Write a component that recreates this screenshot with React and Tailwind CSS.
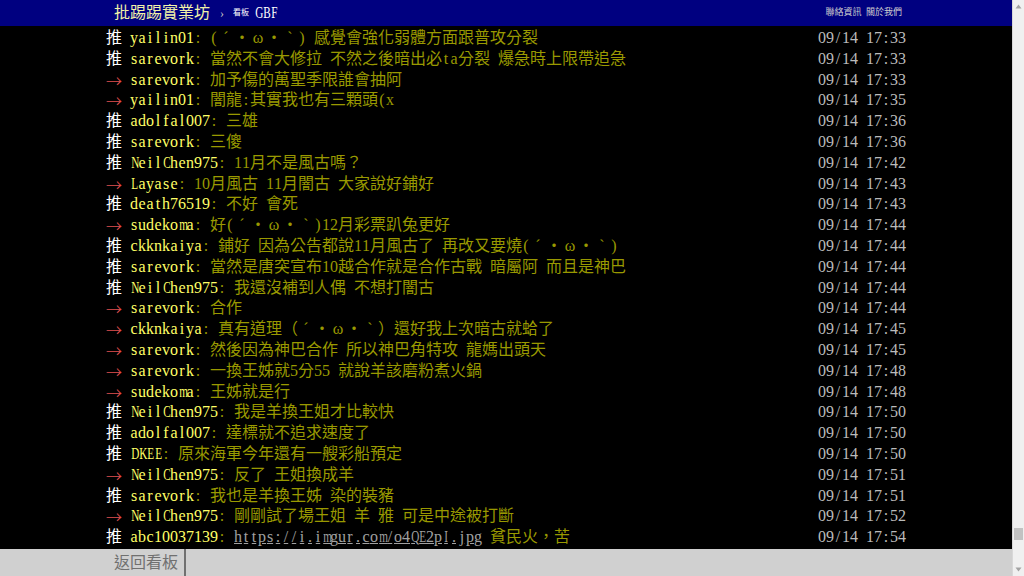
const rows = [
  ["推", "yailin01", ": (ˊ・ω・ˋ) 感覺會強化弱體方面跟普攻分裂", "09/14 17:33"],
  ["推", "sarevork", ": 當然不會大修拉 不然之後暗出必ta分裂 爆急時上限帶追急", "09/14 17:33"],
  ["→", "sarevork", ": 加予傷的萬聖季限誰會抽阿", "09/14 17:33"],
  ["→", "yailin01", ": 闇龍:其實我也有三顆頭(x", "09/14 17:35"],
  ["推", "adolfal007", ": 三雄", "09/14 17:36"],
  ["推", "sarevork", ": 三傻", "09/14 17:36"],
  ["推", "NeilChen975", ": 11月不是風古嗎？", "09/14 17:42"],
  ["→", "Layase", ": 10月風古 11月闇古 大家說好鋪好", "09/14 17:43"],
  ["推", "death76519", ": 不好 會死", "09/14 17:43"],
  ["→", "sudekoma", ": 好(ˊ・ω・ˋ)12月彩票趴兔更好", "09/14 17:44"],
  ["推", "ckknkaiya", ": 鋪好 因為公告都說11月風古了 再改又要燒(ˊ・ω・ˋ)", "09/14 17:44"],
  ["推", "sarevork", ": 當然是唐突宣布10越合作就是合作古戰 暗屬阿 而且是神巴", "09/14 17:44"],
  ["推", "NeilChen975", ": 我還沒補到人偶 不想打闇古", "09/14 17:44"],
  ["→", "sarevork", ": 合作", "09/14 17:44"],
  ["→", "ckknkaiya", ": 真有道理（ˊ・ω・ˋ）還好我上次暗古就蛤了", "09/14 17:45"],
  ["→", "sarevork", ": 然後因為神巴合作 所以神巴角特攻 龍媽出頭天", "09/14 17:45"],
  ["→", "sarevork", ": 一換王姊就5分55 就說羊該磨粉煮火鍋", "09/14 17:48"],
  ["→", "sudekoma", ": 王姊就是行", "09/14 17:48"],
  ["推", "NeilChen975", ": 我是羊換王姐才比較快", "09/14 17:50"],
  ["推", "adolfal007", ": 達標就不追求速度了", "09/14 17:50"],
  ["推", "DKEE", ": 原來海軍今年還有一艘彩船預定", "09/14 17:50"],
  ["→", "NeilChen975", ": 反了 王姐換成羊", "09/14 17:51"],
  ["推", "sarevork", ": 我也是羊換王姊 染的裝豬", "09/14 17:51"],
  ["→", "NeilChen975", ": 剛剛試了場王姐 羊 雅 可是中途被打斷", "09/14 17:52"],
  ["推", "abc10037139", null, "09/14 17:54"],
];

// terminal-style cells: half width for ascii, full width otherwise.
// wide latin glyphs get squeezed so they fit the 8px cell like MingLiU does
function cellClass(ch) {
  if (ch.charCodeAt(0) >= 128) return "inline-block w-4 text-center";
  if (/[A-Zmw@%]/.test(ch)) return "inline-block w-2 text-center scale-x-[0.7]";
  return "inline-block w-2 text-center";
}

function Cells({ text, className = "" }) {
  return [...text].map((ch, i) => (
    <span key={i} className={cellClass(ch) + " " + className}>
      {ch}
    </span>
  ));
}

function PushRow({ tag, user, content, time }) {
  return (
    <div className="flex whitespace-nowrap">
      {tag === "推" ? (
        <span className="inline-block w-4 text-center text-white">推</span>
      ) : (
        <span className="inline-block w-4 text-center text-[#e05050] font-['Noto_Sans_CJK_TC',sans-serif] font-light">→</span>
      )}
      <span className="inline-block w-2" />
      <span className="text-[#ffff66]">
        <Cells text={user} />
      </span>
      <span className="text-[#999900]">
        {content ? (
          <Cells text={content} />
        ) : (
          <>
            <Cells text=": " />
            <Cells text="https://i.imgur.com/o4QE2pI.jpg" className="underline text-[#a0a0a0]" />
            <Cells text=" 貧民火，苦" />
          </>
        )}
      </span>
      <span className="ml-auto text-[#bbbbbb]">
        <Cells text={time} />
      </span>
    </div>
  );
}

export default function App() {
  return (
    <div className="flex h-screen bg-black font-['Liberation_Serif','Noto_Sans_CJK_TC',serif]">
      <div className="flex flex-1 flex-col">
        <div className="h-[26px] bg-[#000080]">
          <div className="mx-auto flex h-full w-[800px] items-center pl-2 pr-1">
            <span className="text-base text-[#f2f2a8]">批踢踢實業坊</span>
            <span className="ml-[10px] text-[12px] text-[#c8c8c8]">›</span>
            <span className="ml-[9px] text-[8px] text-white">看板</span>
            <span className="ml-[5px] text-base text-white">
              <Cells text="GBF" />
            </span>
            <span className="ml-auto text-[9px] text-[#cfcfcf]">聯絡資訊&nbsp;&nbsp;關於我們</span>
          </div>
        </div>
        <div className="flex-1 overflow-hidden pt-[2px]">
          <div className="mx-auto w-[800px] text-base leading-[20.8px]">
            {rows.map(([tag, user, content, time], i) => (
              <PushRow key={i} tag={tag} user={user} content={content} time={time} />
            ))}
          </div>
        </div>
        <div className="h-[27px] bg-[#d0d0d0]">
          <div className="mx-auto flex h-full w-[800px]">
            <div className="flex items-center border-r-2 border-[#707070] pl-2 pr-[6px] text-base text-[#707070]">
              返回看板
            </div>
          </div>
        </div>
      </div>
      <div className="relative w-3 border-l border-[#d8d8d8] bg-[#f0f0f0]">
        <svg className="absolute left-[2px] top-[4px]" width="7" height="5" viewBox="0 0 7 5">
          <path d="M3.5 0.5 L6.5 4.5 L0.5 4.5 Z" fill="#a3a3a3" />
        </svg>
        <div className="absolute left-[1px] top-[528px] h-[12px] w-[9px] bg-[#c2c2c2]" />
        <svg className="absolute bottom-[4px] left-[2px]" width="7" height="5" viewBox="0 0 7 5">
          <path d="M0.5 0.5 L6.5 0.5 L3.5 4.5 Z" fill="#a3a3a3" />
        </svg>
      </div>
    </div>
  );
}
